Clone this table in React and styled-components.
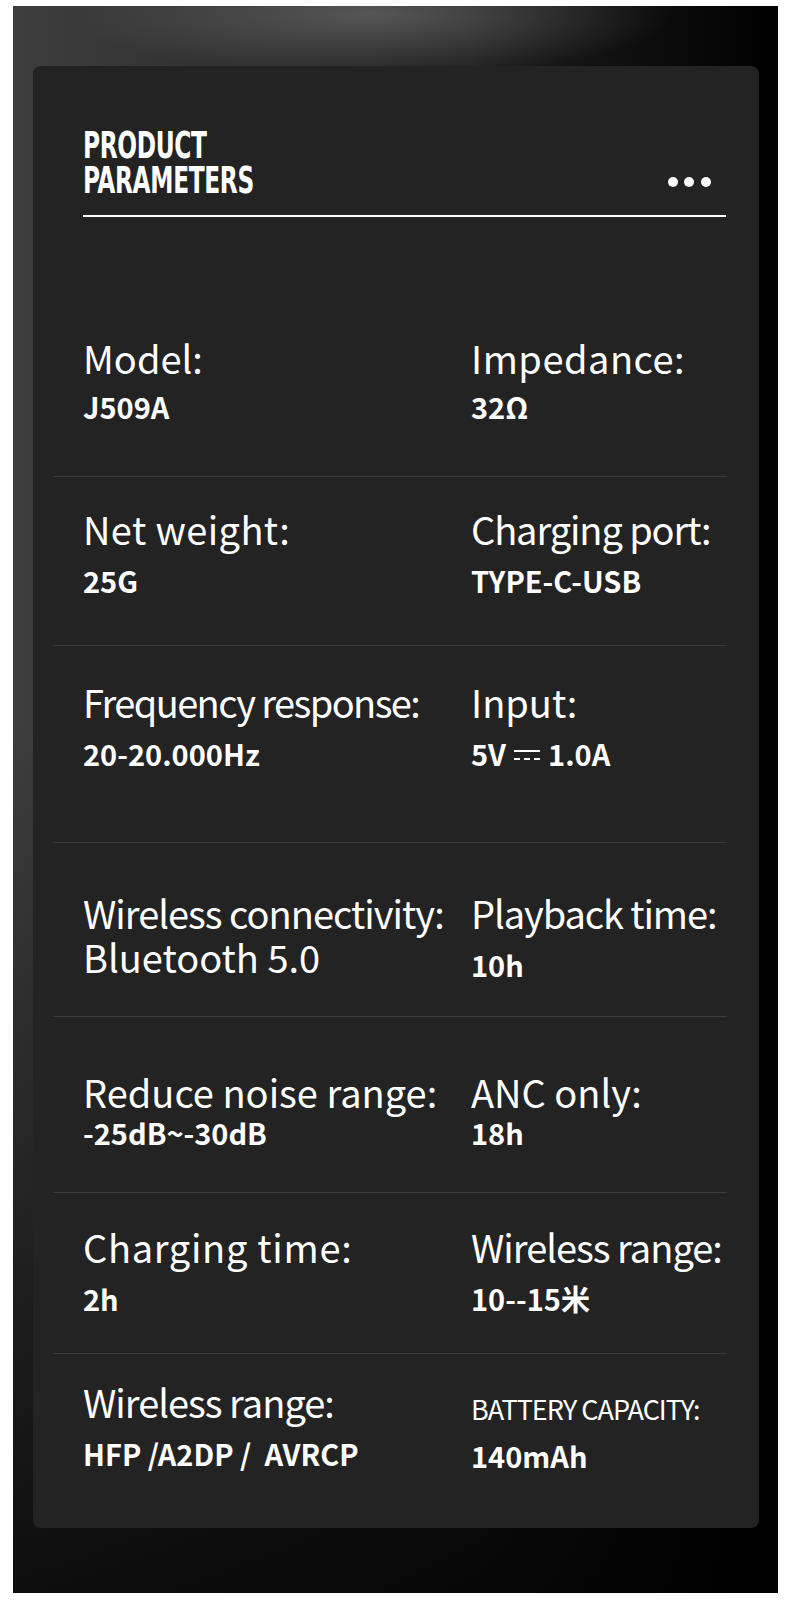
import styled, { createGlobalStyle } from "styled-components";

const GlobalStyle = createGlobalStyle`
  html, body {
    margin: 0;
    padding: 0;
    background: #ffffff;
  }
`;

const Frame = styled.div`
  width: 765px;
  height: 1587px;
  margin: 6px 12px 0 13px;
  padding-top: 60px;
  box-sizing: border-box;
  background:
    radial-gradient(ellipse 300px 62px at 360px 8px, rgba(125, 125, 125, 0.55), rgba(125, 125, 125, 0) 100%),
    linear-gradient(to bottom, rgba(0, 0, 0, 0) 0%, rgba(0, 0, 0, 0) 45%, rgba(0, 0, 0, 0.78) 100%),
    linear-gradient(to right, #3e3e3e 0%, #313131 25%, #202020 60%, #0c0c0c 84%, #000000 100%);
`;

const Card = styled.div`
  width: 726px;
  height: 1462px;
  margin-left: 20px;
  border-radius: 8px;
  background: #232323;
  font-family: "Noto Sans CJK SC", "Noto Sans", sans-serif;
  color: #ffffff;
  overflow: hidden;
`;

const Header = styled.div`
  padding: 62px 33px 0 50px;
`;

const HeadRow = styled.div`
  display: flex;
  justify-content: space-between;
  align-items: flex-end;
`;

const Title = styled.h1`
  margin: 0;
  font-family: "DejaVu Sans Condensed", "DejaVu Sans", sans-serif;
  font-weight: 700;
  font-size: 37px;
  line-height: 35px;
  text-transform: uppercase;
  display: inline-block;
  transform: scaleX(0.7);
  transform-origin: left center;
  letter-spacing: -0.5px;

  span {
    display: block;
  }
`;

const Dots = styled.div`
  display: flex;
  gap: 6.6px;
  margin: 0 15px 11px 0;

  span {
    width: 10px;
    height: 10px;
    border-radius: 50%;
    background: #ffffff;
  }
`;

const Rule = styled.div`
  height: 1.5px;
  margin-top: 17px;
  background: #ffffff;
`;

const List = styled.div`
  margin: 0 32px 0 20px;
`;

const Row = styled.div`
  height: ${(p) => p.$h}px;
  box-sizing: border-box;
  padding: ${(p) => p.$pt}px 0 0 30px;
  display: grid;
  grid-template-columns: 388px 1fr;
  border-bottom: ${(p) => (p.$last ? "none" : "1px solid #3b3b3b")};
`;

const Cell = styled.div`
  display: flex;
  flex-direction: column;
  gap: ${(p) => p.$gap}px;
`;

const Label = styled.div`
  font-size: 38px;
  line-height: 38px;
  font-weight: 400;
  white-space: nowrap;
  letter-spacing: ${(p) => p.$ls ?? 0}px;
`;

const SmallLabel = styled.div`
  font-size: 27px;
  line-height: 38px;
  padding-top: 7px;
  margin-bottom: -5px;
  font-weight: 400;
  white-space: nowrap;
  letter-spacing: -1px;
`;

const Value = styled.div`
  font-size: 29px;
  line-height: 29px;
  font-weight: 700;
  white-space: pre;
`;

const DcSymbol = styled.span`
  display: inline-block;
  width: 26px;
  height: 6px;
  margin: 0 8px 0 8px;
  vertical-align: 6px;
  border-top: 2px solid #ffffff;
  border-bottom: 2px dashed #ffffff;
`;

const rows = [
  {
    h: 260, pt: 122, gap: 15,
    left: { label: "Model:", value: "J509A" },
    right: { label: "Impedance:", value: "32Ω", ls: 0.5 },
  },
  {
    h: 169, pt: 33, gap: 18,
    left: { label: "Net weight:", value: "25G", ls: 0.4 },
    right: { label: "Charging port:", value: "TYPE-C-USB", ls: -1.1 },
  },
  {
    h: 197, pt: 37, gap: 18,
    left: { label: "Frequency response:", value: "20-20.000Hz", ls: -1.6 },
    right: { label: "Input:", value: "dc" },
  },
  {
    h: 174, pt: 51, gap: 18,
    left: { label: "Wireless connectivity:", value: "Bluetooth 5.0", plain: true, ls: -1 },
    right: { label: "Playback time:", value: "10h", ls: -1.1 },
  },
  {
    h: 176, pt: 56, gap: 7,
    left: { label: "Reduce noise range:", value: "-25dB~-30dB" },
    right: { label: "ANC only:", value: "18h" },
  },
  {
    h: 161, pt: 35, gap: 18,
    left: { label: "Charging time:", value: "2h", ls: 0.7 },
    right: { label: "Wireless range:", value: "10--15米", ls: -1 },
  },
  {
    h: 173, pt: 29, gap: 18, last: true,
    left: { label: "Wireless range:", value: "HFP /A2DP /  AVRCP", ls: -1 },
    right: { label: "BATTERY CAPACITY:", value: "140mAh", small: true },
  },
];

function Spec({ item, gap }) {
  return (
    <Cell $gap={item.plain ? 6 : gap}>
      {item.small ? (
        <SmallLabel>{item.label}</SmallLabel>
      ) : (
        <Label $ls={item.ls}>{item.label}</Label>
      )}
      {item.plain ? (
        <Label>{item.value}</Label>
      ) : item.value === "dc" ? (
        <Value>
          5V<DcSymbol />1.0A
        </Value>
      ) : (
        <Value>{item.value}</Value>
      )}
    </Cell>
  );
}

export default function App() {
  return (
    <>
      <GlobalStyle />
      <Frame>
        <Card>
          <Header>
            <HeadRow>
              <Title>
                <span>Product</span>
                <span>Parameters</span>
              </Title>
              <Dots>
                <span />
                <span />
                <span />
              </Dots>
            </HeadRow>
            <Rule />
          </Header>
          <List>
            {rows.map((r, i) => (
              <Row key={i} $h={r.h} $pt={r.pt} $last={r.last}>
                <Spec item={r.left} gap={r.gap} />
                <Spec item={r.right} gap={r.gap} />
              </Row>
            ))}
          </List>
        </Card>
      </Frame>
    </>
  );
}
